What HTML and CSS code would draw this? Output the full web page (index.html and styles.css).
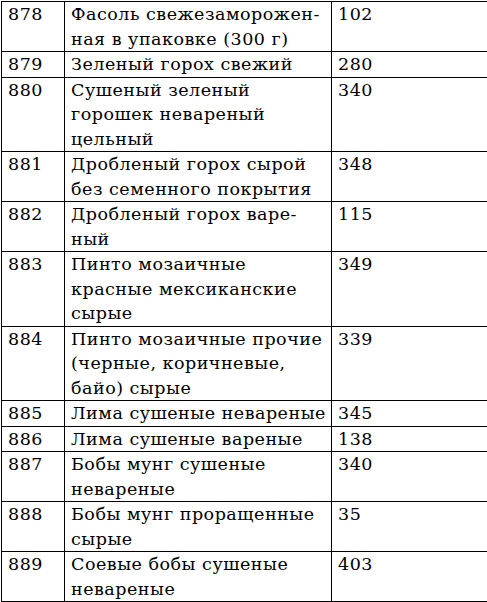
FILE: index.html
```html
<!DOCTYPE html>
<html lang="ru">
<head>
<meta charset="utf-8">
<link rel="stylesheet" href="styles.css">
</head>
<body>
<table class="tbl">
<colgroup><col class="c1"><col class="c2"><col class="c3"></colgroup>
<tr class="r2"><td>878</td><td>Фасоль свежезаморожен-<br>ная в упаковке (300 г)</td><td>102</td></tr>
<tr class="r1"><td>879</td><td>Зеленый горох свежий</td><td>280</td></tr>
<tr class="r3"><td>880</td><td>Сушеный зеленый<br>горошек невареный<br>цельный</td><td>340</td></tr>
<tr class="r2"><td>881</td><td>Дробленый горох сырой<br>без семенного покрытия</td><td>348</td></tr>
<tr class="r2"><td>882</td><td>Дробленый горох варе-<br>ный</td><td>115</td></tr>
<tr class="r3"><td>883</td><td>Пинто мозаичные<br>красные мексиканские<br>сырые</td><td>349</td></tr>
<tr class="r3"><td>884</td><td>Пинто мозаичные прочие<br>(черные, коричневые,<br>байо) сырые</td><td>339</td></tr>
<tr class="r1"><td>885</td><td>Лима сушеные невареные</td><td>345</td></tr>
<tr class="r1"><td>886</td><td>Лима сушеные вареные</td><td>138</td></tr>
<tr class="r2"><td>887</td><td>Бобы мунг сушеные<br>невареные</td><td>340</td></tr>
<tr class="r2"><td>888</td><td>Бобы мунг проращенные<br>сырые</td><td>35</td></tr>
<tr class="r2"><td>889</td><td>Соевые бобы сушеные<br>невареные</td><td>403</td></tr>
</table>
</body>
</html>
```
FILE: styles.css
```css
html, body {
  margin: 0;
  padding: 0;
  background: #fff;
}
.tbl {
  margin: 1px 0 0 1px;
  width: 486px;
  border-collapse: collapse;
  table-layout: fixed;
  color: #000;
}
.c1 { width: 63px; }
.c2 { width: 267px; }
.c3 { width: 156px; }
.tbl td {
  font-family: "DejaVu Serif", "Liberation Serif", serif;
  font-size: 17.5px;
  letter-spacing: 0.5px;
  border: 1px solid #000;
  padding: 0 0 0 6px;
  vertical-align: top;
  line-height: 24.5px;
  white-space: nowrap;
}
.r1 td { height: 24.5px; }
.r2 td { height: 49px; }
.r3 td { height: 73.5px; }
```
